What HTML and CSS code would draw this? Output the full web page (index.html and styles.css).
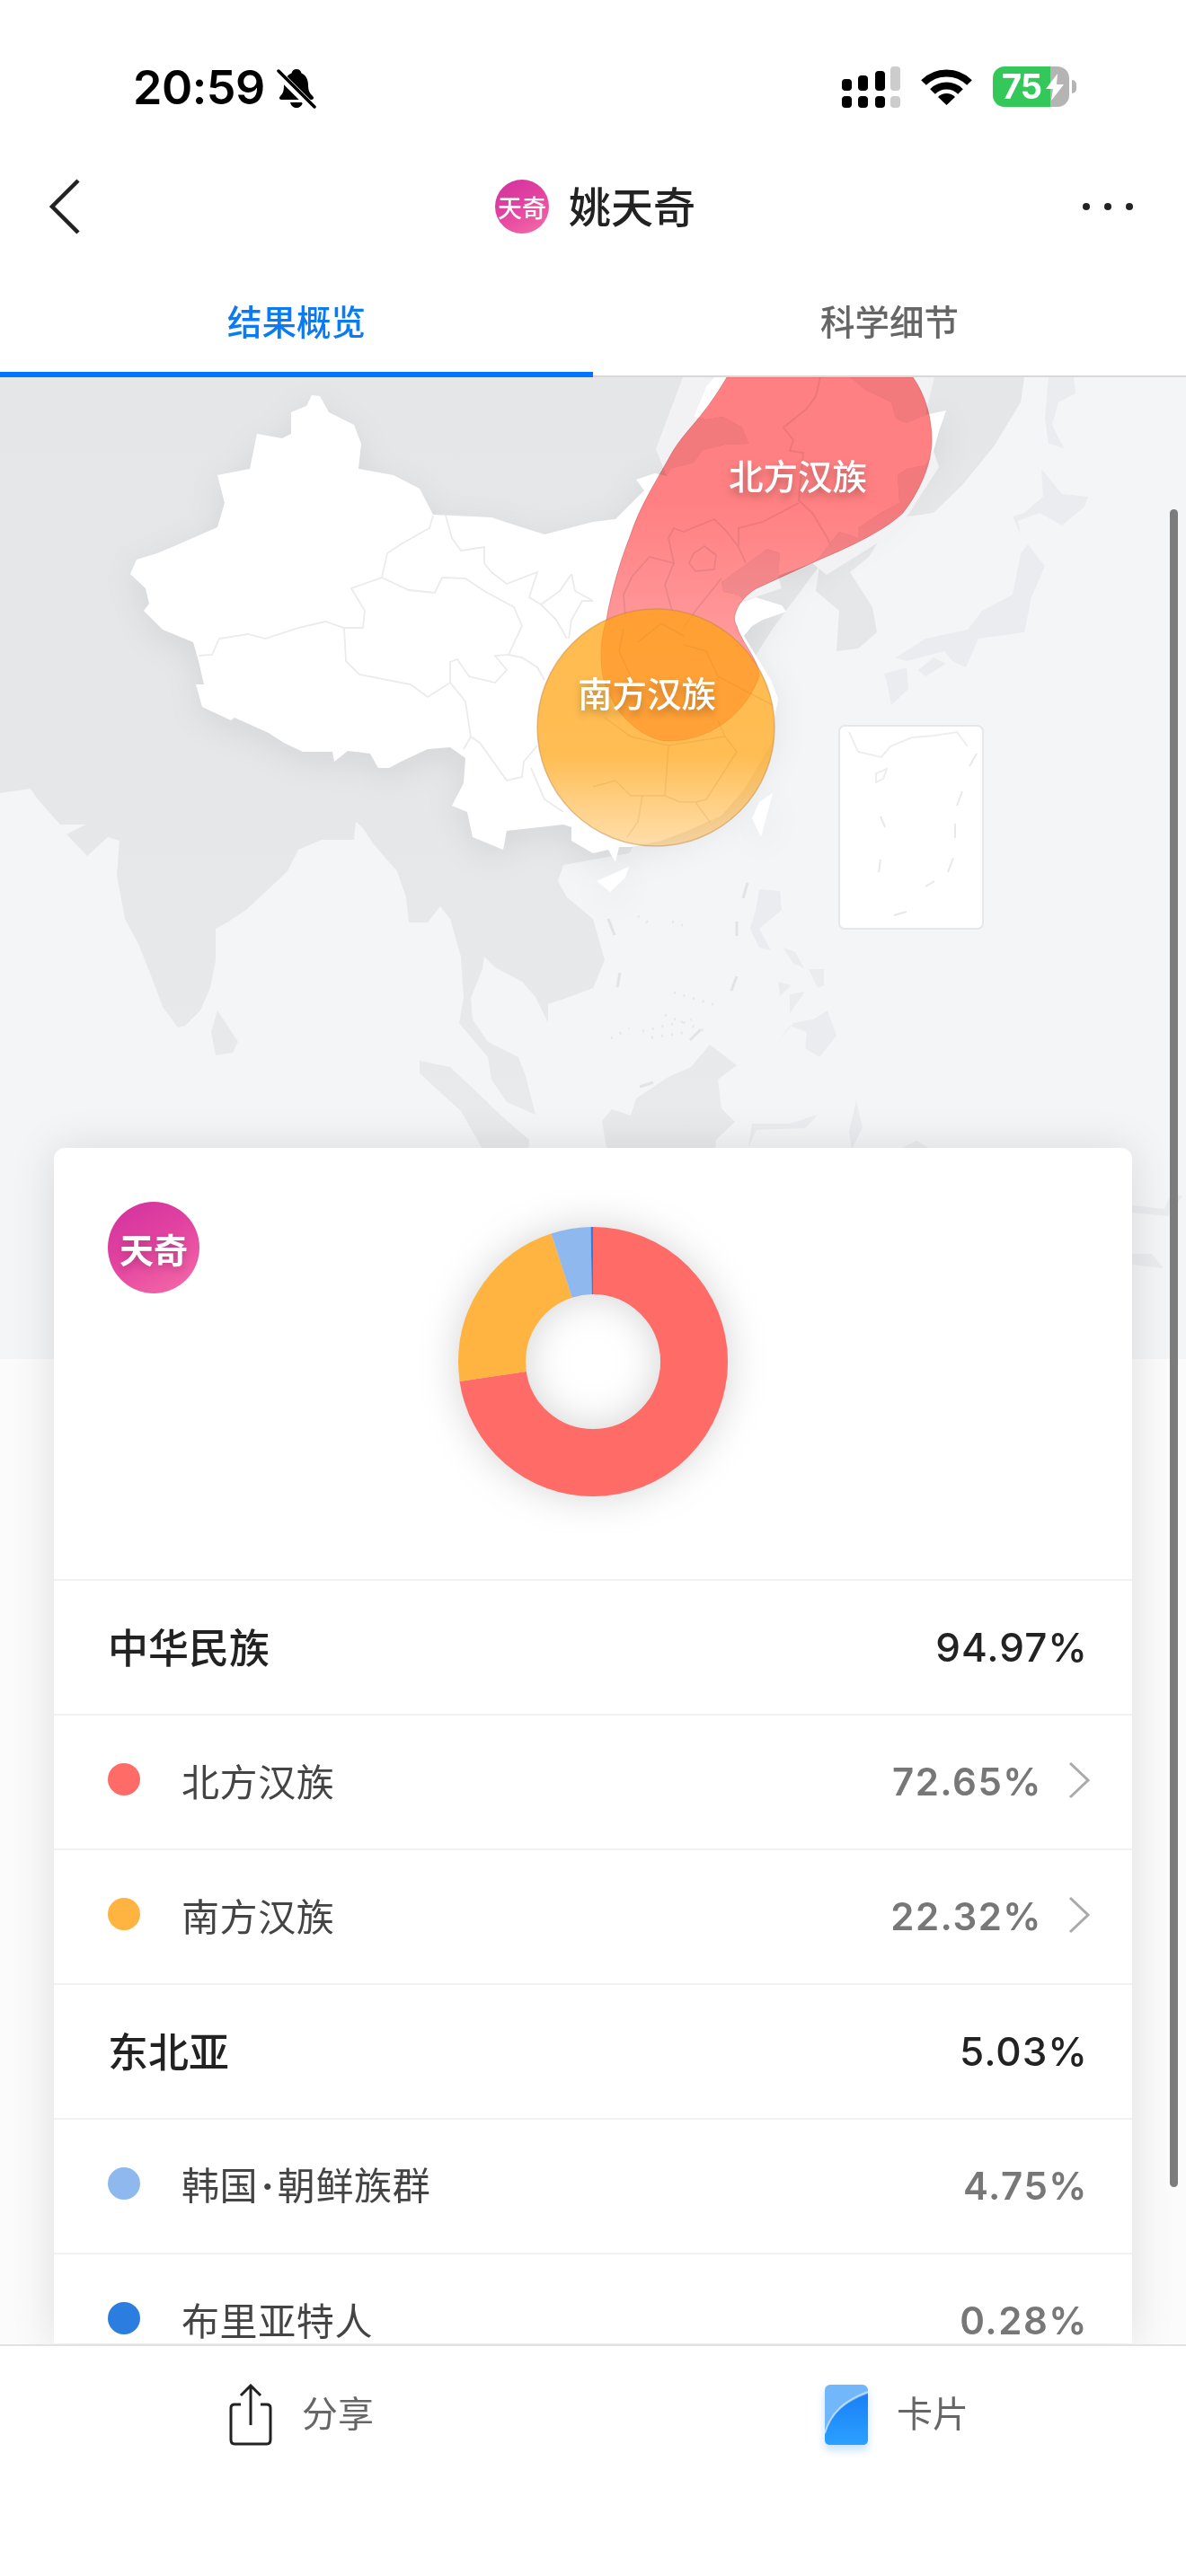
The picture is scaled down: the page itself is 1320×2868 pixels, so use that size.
FILE: index.html
```
<!DOCTYPE html>
<html lang="zh-CN">
<head>
<meta charset="utf-8">
<title>姚天奇</title>
<link rel="stylesheet" href="styles.css">
</head>
<body>
<div class="app">
  <header class="status">
    <div class="status-left">
      <span class="time">20:59</span>
      <svg class="bell" width="44" height="46" viewBox="0 0 44 46">
        <path d="M22 1c3 0 5 2 5.500 4.500C33 8 35 13 35 19c0 6 2 9 5 12 2 2 1 4-2 4H6c-3 0-4-2-2-4 3-3 4-6 4-12 0-6 3-11 8.500-13.500C17 3 19 1 22 1z" fill="#000"/>
        <path d="M15 38h14c-1 4-4 6-7 6s-6-2-7-6z" fill="#000"/>
        <path d="M3 7l37 37" stroke="#fff" stroke-width="9" fill="none"/>
        <path d="M2 3l40 40" stroke="#000" stroke-width="3.500" stroke-linecap="round" fill="none"/>
      </svg>
    </div>
    <div class="status-right">
      <svg class="signal" width="66" height="46" viewBox="0 0 66 46">
        <rect x="0" y="14" width="11" height="13" rx="4" fill="#000"/>
        <rect x="18" y="10" width="11" height="17" rx="4" fill="#000"/>
        <rect x="37" y="5" width="11" height="22" rx="4" fill="#000"/>
        <rect x="54" y="0" width="11" height="27" rx="4" fill="#ccc"/>
        <rect x="0" y="33" width="11" height="13" rx="4" fill="#000"/>
        <rect x="18" y="33" width="11" height="13" rx="4" fill="#000"/>
        <rect x="37" y="33" width="11" height="13" rx="4" fill="#000"/>
        <rect x="54" y="33" width="11" height="13" rx="4" fill="#ccc"/>
      </svg>
      <svg class="wifi" width="57" height="43" viewBox="0 0 57 43">
        <path d="M3 17A36 36 0 0 1 54 17" stroke="#000" stroke-width="8" fill="none"/>
        <path d="M13 27A22 22 0 0 1 44 27" stroke="#000" stroke-width="8" fill="none"/>
        <path d="M28.500 42L19 33A13.400 13.400 0 0 1 38 33Z" fill="#000"/>
      </svg>
      <div class="battery">
        <span class="battery-num">75</span>
        <svg class="bolt" width="22" height="30" viewBox="0 0 22 30">
          <path d="M14 0L1 17h8L7 30l14-18h-8z" fill="#fff"/>
        </svg>
      </div>
    </div>
  </header>

  <nav class="nav">
    <svg class="back" width="36" height="62" viewBox="0 0 36 62">
      <path d="M33 2L4 31l29 29" stroke="#222" stroke-width="4.500" fill="none"/>
    </svg>
    <div class="nav-title">
      <span class="avatar avatar-small">天奇</span>
      <span class="name">姚天奇</span>
    </div>
    <div class="more"><i></i><i></i><i></i></div>
  </nav>

  <div class="tabs">
    <div class="tab tab-active">结果概览</div>
    <div class="tab">科学细节</div>
  </div>

  <main class="content">
    <section class="map">
      <svg class="map-svg" width="1320" height="1093" viewBox="0 420 1320 1093">
        <defs>
          <linearGradient id="landFill" gradientUnits="userSpaceOnUse" x1="0" y1="420" x2="0" y2="1290">
            <stop offset="0" stop-color="#e5e6e8"/>
            <stop offset=".55" stop-color="#e6e7e9"/>
            <stop offset="1" stop-color="#e9eaec"/>
          </linearGradient>
          <linearGradient id="redFill" gradientUnits="userSpaceOnUse" x1="0" y1="560" x2="0" y2="740">
            <stop offset="0" stop-color="#ff8082"/>
            <stop offset="1" stop-color="#ff9ea0"/>
          </linearGradient>
          <linearGradient id="orangeFill" gradientUnits="userSpaceOnUse" x1="0" y1="678" x2="0" y2="942">
            <stop offset="0" stop-color="#ffa310" stop-opacity=".74"/>
            <stop offset=".617" stop-color="#ffa310" stop-opacity=".72"/>
            <stop offset=".814" stop-color="#ffa310" stop-opacity=".52"/>
            <stop offset="1" stop-color="#ffa820" stop-opacity=".38"/>
          </linearGradient>
        </defs>
        <g class="land">
          <path d="M0 420H1140L1136 448 1106 497 1072 539 1039 571 1010 575 980 599 967 620 946 637 971 676 976 704 955 722 931 725 934 680 908 658 912 630 860 700 700 950 627 963 621 981 631 999 660 1023 673 1069 660 1100 631 1111 610 1118 610 1139 596 1110 581 1093 551 1077 539 1065 537 1079 524 1111 526 1135 543 1160 577 1177 585 1198 596 1241 564 1227 547 1202 543 1177 511 1139 516 1111 513 1065 501 1023 490 1009 476 1027 455 1027 452 999 442 970 415 939 404 922 396 915 394 935 358 935 332 946 320 970 274 1013 253 1027 240 1034 240 1069 234 1100 223 1125 206 1142 198 1144 181 1121 168 1086 154 1051 139 1023 130 974 133 936 120 932 97 953 74 929 95 918 67 918 42 890 34 878 0 883Z"/>
          <path d="M242 1125L265 1160 259 1172 240 1175 235 1149Z"/>
          <path d="M467 1181L501 1188 535 1220 560 1244 589 1269 587 1290 543 1290 513 1237 467 1195Z"/>
          <path d="M790 1163L820 1186 799 1202 803 1234 818 1249 797 1269 795 1290H677L670 1248 681 1235 702 1242 708 1223 744 1199 769 1188Z"/>
        </g>
        <g class="land-far">
          <path d="M1167 420H1195L1197 438 1178 448 1171 473 1184 499 1167 494 1163 466Z"/>
          <path d="M1159 522L1182 550 1211 553 1207 564 1182 585 1157 571 1133 580 1136 595 1127 575 1140 571 1161 553Z"/>
          <path d="M1144 606L1163 630 1148 665 1140 704 1089 711 1075 743 1060 736 1051 725 1009 736 997 732 1030 711 1077 701 1093 680 1127 662 1136 616Z"/>
          <path d="M1022 746L1039 732 1053 739 1030 753Z"/>
          <path d="M984 750L1009 743 1011 767 992 785 988 764Z"/>
          <path d="M845 990L868 992 870 1013 845 1034 858 1058 845 1055 835 1034 841 1013Z"/>
          <path d="M921 1125L931 1153 912 1177 896 1167 898 1149 879 1142 866 1160 883 1139 905 1135Z"/>
          <path d="M900 1079H917V1097L910 1100Z"/>
          <path d="M866 1093L881 1097 868 1109Z"/>
          <path d="M879 1107L896 1104 879 1128Z"/>
          <path d="M872 1055L885 1060 895 1078 882 1072Z"/>
          <path d="M833 1277L837 1251 879 1251 910 1241 896 1256 842 1258Z"/>
          <path d="M953 1225L960 1255 948 1280 945 1260Z"/>
          <path d="M1000 1280L1020 1270 1040 1282Z"/>
          <path d="M1260 1342L1296 1346 1304 1328 1316 1332 1300 1354 1260 1350Z"/>
          <path d="M1260 1396L1282 1396 1295 1412 1260 1408Z"/>
        </g>
        <g class="dashes">
          <path d="M832 983L827 1000M677 1023L684 1041M820 1026V1042M690 1083L687 1099M820 1087L814 1103M780 1146L768 1158M712 1210L727 1205"/>
        </g>
        <path class="dots" d="M710 1020L726 1030M748 1026L760 1030M750 1105L800 1120M740 1130L790 1150M680 1156L700 1145M715 1148L770 1135M725 1155L760 1150"/>
        <path class="china" d="M347 440L356 441 366 459 394 473 402 494 399 522 438 529 467 544 482 573 547 576 568 583 606 595 660 581 685 578 710 553 717 546 708 534 729 527 742 530 746 522 772 515 782 501 807 495 833 494 826 476 805 464 786 467 772 464 786 430 795 420H946L963 434 992 448 997 466 1009 471 1030 462 1053 457 1045 480 1039 502 1030 518 1009 522 999 529 1001 560 980 571 955 588 955 599 934 592 912 620 904 627 866 641 868 616 854 611 828 630 803 648 805 659 822 662 828 669 822 672 841 665 870 674 875 681 849 690 837 697 828 708 845 736 858 757 866 778 862 799 861 823 845 851 828 879 803 908 765 925 736 936 702 943 689 943 685 960 677 946 660 950 636 936 636 921 627 918 564 925 560 946 526 932 520 904 503 897 516 872 518 844 501 832 476 834 446 848 433 855 421 855 412 839 387 836 372 848 370 837 337 837 316 827 299 816 261 799 257 802 225 787 218 762 227 762 221 736 215 715 181 701 160 680 166 672 162 655 145 639 152 623 175 616 194 608 242 587 250 560 242 529 278 522 286 483 314 488 324 483 324 459 341 452Z"/>
        <path class="china" d="M860 883L847 932 837 911 845 893Z"/>
        <path class="china" d="M664 981L700 965 696 977 679 993Z"/>
        <g class="patches">
          <path d="M946 420L963 434 992 448 997 466 1009 471 1030 462 1040 420Z"/>
          <path d="M760 420H795L786 430 772 464 786 467 805 464 826 476 833 494 807 495 782 501 772 515 746 522 742 530 730 500Z"/>
          <path d="M1039 502L1030 518 1009 522 999 529 1001 560 980 571 955 588 955 599 934 592 912 620 904 627 920 640 1000 590 1045 520Z"/>
          <path d="M866 641L868 616 854 611 828 630 803 648 805 659 822 662 828 669 870 655Z"/>
        </g>
        <g class="borders">
          <path d="M496 574L503 599 513 613 539 609 539 627 547 637 564 650 598 637 589 665 602 673 619 690 631 711"/>
          <path d="M482 574L478 588 446 606 431 616 425 643 391 655 406 680 404 699 383 699 362 692 332 699 295 711 276 706 244 711 236 729 221 730"/>
          <path d="M383 699L385 736 400 751 457 762 476 776 501 760 518 781 524 820 516 834"/>
          <path d="M425 643L455 657 484 660 492 643 518 644 539 658 572 676 581 697 566 729 551 730 564 746 551 760 522 753 509 734 501 737 501 760"/>
          <path d="M524 820L534 827 564 869 581 865 583 848 598 830"/>
          <path d="M566 729L581 732 598 743 606 757"/>
          <path d="M636 639L623 658 602 673M636 639L640 658 660 669 648 669 636 690 633 711"/>
          <path d="M591 855L606 890 627 904"/>
          <path d="M913 420L908 441 898 455 872 476 883 490 879 502 894 504 889 557 904 571 921 599 925 609"/>
          <path d="M889 560L849 581 822 588 822 609 830 627M795 578L809 592 822 609M795 578L761 592 750 588 744 599 750 627 723 620 704 641 694 662 696 687"/>
          <path d="M750 627L740 651 748 680M784 608L797 618 795 634 774 636 767 627 772 616ZM803 644L774 680 760 700"/>
        </g>
        <path class="region-north" d="M809 420C780 470 760 480 744 511 725 545 712 565 702 595 690 625 680 660 675 690 665 720 668 760 681 778 690 800 720 825 744 825 790 825 830 795 845 753 845 735 825 715 820 697 812 685 825 665 842 655L912 623C950 607 985 590 1005 571 1025 545 1037 515 1037 490 1037 465 1030 440 1016 420Z"/>
        <ellipse class="region-south" cx="730" cy="810" rx="132" ry="132"/>
        <g class="borders-over">
          <path d="M694 700L689 725 702 753 690 790M761 708L736 694 710 715M761 718L786 725 799 753 833 771 860 785M799 802L807 820 744 830 740 886 757 893 774 893 790 915M807 820L820 837 786 890 774 893M744 830L702 820 673 799M660 876L685 869 702 886 740 886M715 886L710 915 698 932"/>
        </g>
      </svg>
      <span class="map-label label-north">北方汉族</span>
      <span class="map-label label-south">南方汉族</span>
      <div class="inset">
        <svg width="160" height="226" viewBox="0 0 160 226">
          <path class="inset-coast" d="M10 6L20 28 46 34 56 22 80 12 105 10 130 6 142 22"/>
          <path class="inset-land" d="M40 52L52 47 48 58 40 62Z"/>
          <path class="inset-dash" d="M152 30L144 44M136 72L130 88M45 100L50 112M128 108V124M45 148L43 162M126 146L120 162M95 178L105 172M60 210L74 206"/>
        </svg>
      </div>
    </section>

    <section class="card">
      <div class="card-head">
        <span class="avatar avatar-large">天奇</span>
        <svg class="donut" width="300" height="300" viewBox="0 0 300 300">
          <circle class="seg seg-red" cx="150" cy="150" r="112.500" pathLength="100" stroke-dasharray="72.65 27.35" stroke-dashoffset="0"/>
          <circle class="seg seg-orange" cx="150" cy="150" r="112.500" pathLength="100" stroke-dasharray="22.32 77.68" stroke-dashoffset="-72.65"/>
          <circle class="seg seg-light" cx="150" cy="150" r="112.500" pathLength="100" stroke-dasharray="4.75 95.25" stroke-dashoffset="-94.97"/>
          <circle class="seg seg-blue" cx="150" cy="150" r="112.500" pathLength="100" stroke-dasharray="0.28 99.72" stroke-dashoffset="-99.72"/>
        </svg>
      </div>
      <div class="row row-main"><span class="row-name">中华民族</span><span class="row-value">94.97%</span></div>
      <div class="row row-sub">
        <i class="dot dot-red"></i><span class="row-name">北方汉族</span><span class="row-value">72.65%</span>
        <svg class="chev" width="26" height="42" viewBox="0 0 26 42"><path d="M3 2l20 19L3 40" stroke="#aaa" stroke-width="3" fill="none"/></svg>
      </div>
      <div class="row row-sub">
        <i class="dot dot-orange"></i><span class="row-name">南方汉族</span><span class="row-value">22.32%</span>
        <svg class="chev" width="26" height="42" viewBox="0 0 26 42"><path d="M3 2l20 19L3 40" stroke="#aaa" stroke-width="3" fill="none"/></svg>
      </div>
      <div class="row row-main"><span class="row-name">东北亚</span><span class="row-value">5.03%</span></div>
      <div class="row row-sub"><i class="dot dot-light"></i><span class="row-name">韩国<span class="mid">·</span>朝鲜族群</span><span class="row-value">4.75%</span></div>
      <div class="row row-sub row-last"><i class="dot dot-blue"></i><span class="row-name">布里亚特人</span><span class="row-value">0.28%</span></div>
    </section>
    <div class="scrollbar"></div>
  </main>

  <footer class="bottom">
    <div class="action">
      <svg class="action-icon" width="50" height="70" viewBox="0 0 50 70">
        <path d="M14 23H7Q3 23 3 27V62Q3 67 7 67H43Q47 67 47 62V27Q47 23 43 23H36" stroke="#222" stroke-width="3" fill="none"/>
        <path d="M25 46V2M14 13L25 2l11 11" stroke="#222" stroke-width="3" fill="none"/>
      </svg>
      <span class="action-label">分享</span>
    </div>
    <div class="action">
      <svg class="action-icon action-card" width="48" height="67" viewBox="0 0 48 67">
        <defs>
          <linearGradient id="cardBlue" x1="0" y1="0" x2="0" y2="1">
            <stop offset="0" stop-color="#1a7ff5"/>
            <stop offset="1" stop-color="#2ba0ff"/>
          </linearGradient>
        </defs>
        <rect width="48" height="67" rx="6" fill="#73b7fb"/>
        <path d="M0 56C6 35 20 20 48 10V61Q48 67 42 67H6Q0 67 0 61Z" fill="url(#cardBlue)"/>
        <path d="M0 54C6 33 20 18 48 8" stroke="#b4dafc" stroke-width="2" fill="none"/>
      </svg>
      <span class="action-label">卡片</span>
    </div>
  </footer>
</div>
</body>
</html>
```

FILE: styles.css
```
* { box-sizing: border-box; }
html, body { margin: 0; padding: 0; background: #fff; }
body {
  font-family: "Noto Sans CJK SC", "Inter", sans-serif;
  color: #222;
  overflow: hidden;
}
.app {
  width: 1320px;
  height: 2868px;
  display: flex;
  flex-direction: column;
  overflow: hidden;
  background: #fff;
}

/* status bar */
.status {
  height: 170px;
  flex: none;
  display: flex;
  justify-content: space-between;
  align-items: flex-start;
  padding: 73px 130px 0 148px;
}
.status-left { display: flex; align-items: center; gap: 13px; }
.bell { margin-top: 2px; }
.time {
  font-family: "Inter", sans-serif;
  font-weight: 600;
  font-size: 52px;
  line-height: 50px;
  letter-spacing: -0.5px;
  color: #000;
}
.status-right { display: flex; align-items: flex-start; gap: 22px; padding-top: 1px; }
.wifi { margin-top: 1px; }
.battery {
  width: 85px;
  height: 45px;
  margin-left: 1px;
  border-radius: 13px;
  background: linear-gradient(90deg, #34c759 75%, #b4b4b4 75%);
  position: relative;
  display: flex;
  align-items: center;
  padding-left: 10px;
}
.battery::after {
  content: "";
  position: absolute;
  right: -8px;
  top: 15px;
  width: 5px;
  height: 15px;
  border-radius: 0 6px 6px 0;
  background: #b4b4b4;
}
.battery-num {
  font-family: "Inter", sans-serif;
  font-weight: 700;
  font-size: 38px;
  line-height: 45px;
  letter-spacing: -1px;
  color: #fff;
}
.bolt { position: absolute; left: 58px; top: 8px; }

/* nav */
.nav {
  height: 120px;
  flex: none;
  display: flex;
  align-items: center;
  justify-content: space-between;
  padding: 0 60px 0 54px;
}
.nav-title { display: flex; align-items: center; gap: 22px; margin-left: 38px; margin-right: 8px; }
.name { font-size: 47px; font-weight: 500; line-height: 60px; color: #222; padding-bottom: 5px; }
.more { display: flex; gap: 16px; width: 55px; }
.more i { width: 8px; height: 8px; border-radius: 50%; background: #222; flex: none; }

.avatar {
  flex: none;
  display: flex;
  align-items: center;
  justify-content: center;
  border-radius: 50%;
  color: #fff;
  font-weight: 700;
  background: linear-gradient(150deg, #d1329f 0%, #e2429f 45%, #f66da9 100%);
}
.avatar-small { width: 60px; height: 60px; font-size: 27px; font-weight: 500; }
.avatar-large {
  width: 102px;
  height: 102px;
  font-size: 38px;
  text-shadow: 0 4px 8px rgba(0, 0, 0, .18);
}

/* tabs */
.tabs {
  height: 130px;
  flex: none;
  display: flex;
  border-bottom: 2px solid #d8d8da;
}
.tab {
  flex: 1;
  height: 130px;
  display: flex;
  align-items: center;
  justify-content: center;
  padding: 8px 0 6px;
  font-size: 38.500px;
  font-weight: 500;
  color: #666;
}
.tab-active {
  padding-bottom: 0;
  color: #0a7bf2;
  border-bottom: 6px solid #0076ff;
}

/* content */
.content {
  flex: 1;
  min-height: 0;
  overflow: hidden;
  position: relative;
  background: #fbfbfc;
}
.map {
  height: 1093px;
  position: relative;
  background: #f4f5f7;
  overflow: hidden;
}
.map-svg { display: block; }
.land path { fill: url(#landFill); }
.land-far path { fill: #ebecef; }
.patches path { fill: #f2f2f4; }
.dashes path { fill: none; stroke: #e2e3e6; stroke-width: 3; }
.dots { fill: none; stroke: #e6e7ea; stroke-width: 3; stroke-dasharray: 2 9; }
.china {
  fill: #fff;
  filter: drop-shadow(0 10px 18px rgba(0, 0, 0, .07));
}
.borders path { fill: none; stroke: #ebebee; stroke-width: 1.800; }
.borders-over path { fill: none; stroke: rgba(170, 110, 40, .14); stroke-width: 1.500; }
.region-north {
  fill: url(#redFill);
  mix-blend-mode: multiply;
  stroke: rgba(200, 80, 80, .5);
  stroke-width: 1;
}
.region-south {
  fill: url(#orangeFill);
  stroke: rgba(190, 130, 60, .45);
  stroke-width: 1.500;
}
.map-label {
  position: absolute;
  font-size: 38.500px;
  line-height: 50px;
  font-weight: 500;
  color: #fff;
  text-shadow: 0 5px 9px rgba(0, 0, 0, .28);
}
.label-north { left: 811px; top: 83px; }
.label-south { left: 643px; top: 325px; }
.inset {
  position: absolute;
  left: 933px;
  top: 387px;
  width: 162px;
  height: 228px;
  background: #fff;
  border: 2px solid #e6e7ea;
  border-radius: 7px;
  overflow: hidden;
}
.inset svg { display: block; }
.inset-coast { fill: none; stroke: #eeeef1; stroke-width: 2; }
.inset-land { fill: #fff; stroke: #eeeef1; stroke-width: 2; }
.inset-dash { fill: none; stroke: #e8e8eb; stroke-width: 2; }

/* card */
.card {
  margin: -235px 60px 0;
  position: relative;
  background: #fff;
  border-radius: 12px 12px 0 0;
  box-shadow: 0 2px 50px rgba(0, 0, 0, .12);
}
.card-head {
  height: 480px;
  display: grid;
  grid-template-columns: 1fr auto 1fr;
  align-items: start;
  padding-left: 60px;
  padding-right: 60px;
}
.avatar-large { margin-top: 60px; }
.donut {
  margin-top: 88px;
  transform: rotate(-90deg);
  overflow: visible;
  filter: drop-shadow(0 0 22px rgba(0, 0, 0, .17));
}
.seg { fill: none; stroke-width: 75; }
.seg-red { stroke: #ff6b66; }
.seg-orange { stroke: #ffb340; }
.seg-light { stroke: #8fb9ee; }
.seg-blue { stroke: #2b7de0; }

.row {
  height: 150px;
  border-top: 2px solid #f1f1f3;
  display: flex;
  align-items: center;
  padding: 0 49px 0 60px;
}
.row-last { height: 101px; padding-top: 49px; }
.row-name { line-height: 1.2; margin-top: -3px; }
.row-main .row-name { font-size: 45px; font-weight: 500; color: #222; }
.row-main .row-value {
  font-family: "Inter", sans-serif;
  font-size: 44px;
  font-weight: 500;
  letter-spacing: 1px;
  color: #222;
}
.row-sub .row-name { font-size: 42px; letter-spacing: .6px; color: #444; }
.mid { font-family: "Inter", sans-serif; font-weight: 700; padding: 0 3.500px; }
.row-value { margin-left: auto; line-height: 1.2; }
.row-sub .row-value {
  font-family: "Inter", sans-serif;
  font-size: 42px;
  font-weight: 600;
  letter-spacing: 1.500px;
  color: #777;
}
.dot {
  flex: none;
  width: 36px;
  height: 36px;
  border-radius: 50%;
  margin: -6px 46px 0 0;
}
.dot-red { background: #ff6b66; }
.dot-orange { background: #ffb340; }
.dot-light { background: #8fb9ee; }
.dot-blue { background: #2b7de0; }
.chev { flex: none; margin: -4px -3px 0 28px; }

.scrollbar {
  position: absolute;
  left: 1302px;
  top: 147px;
  width: 9px;
  height: 1868px;
  border-radius: 5px;
  background: #7c7c7c;
}

/* bottom */
.bottom {
  height: 258px;
  flex: none;
  display: flex;
  border-top: 2px solid #e2e2e4;
  background: #fff;
}
.action {
  flex: 1;
  height: 120px;
  display: flex;
  align-items: center;
  justify-content: center;
  padding-left: 10px;
  padding-top: 26px;
  gap: 32px;
}
.action-icon { flex: none; margin-top: 7px; }
.action-card { margin-left: 6px; filter: drop-shadow(0 6px 5px rgba(60, 160, 255, .3)); }
.action-label { font-size: 40px; line-height: 50px; color: #666; }
```
